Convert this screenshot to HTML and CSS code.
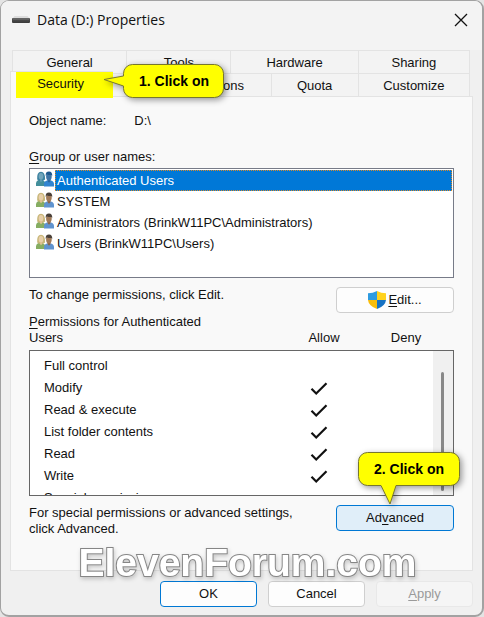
FILE: index.html
```html
<!DOCTYPE html>
<html lang="en">
<head>
<meta charset="utf-8">
<meta name="viewport" content="width=device-width, initial-scale=1">
<title>Data (D:) Properties</title>
<link rel="stylesheet" href="styles.css">
</head>
<body>
<svg class="defs" width="0" height="0" aria-hidden="true">
  <defs>
    <symbol id="check" viewBox="0 0 18 14">
      <path d="M1.500 6.800 6.200 11.500 16.500 1.300" fill="none" stroke="#111" stroke-width="2.200"/>
    </symbol>
    <linearGradient id="drive" x1="0" y1="0" x2="0" y2="1">
      <stop offset="0" stop-color="#555"/><stop offset="1" stop-color="#3a3a3a"/>
    </linearGradient>
    <symbol id="people" viewBox="0 0 18 16">
      <path d="M0 15V12q.3-2.600 3-3.300h3.500l3.500 3V15z" fill="#86ad62"/>
      <path d="M1.200 8.500Q.6 0.800 5 .8q4.200 0 4.100 7.700L7 9.800H3z" fill="#c8b678"/>
      <ellipse cx="5" cy="5.300" rx="2.300" ry="3.300" fill="#e8cfa9"/>
      <path d="M4 8h2.200v2L5 11.300 4 10z" fill="#dfc193"/>
      <path d="M8 15.500V13q.2-3 3-3.600h4q2.800.6 3 3.600v2.500z" fill="#5f93cf"/>
      <path d="M11.500 8h3v2l-1.500 1.700L11.500 10z" fill="#8a6344"/>
      <ellipse cx="12.900" cy="5.700" rx="2.800" ry="3.700" fill="#a07a58"/>
      <path d="M9.700 5Q9.300.6 13 .6 16.600.7 16.200 5.300L15.300 4Q12.500 4.300 11 3.200z" fill="#4a4038"/>
    </symbol>
    <symbol id="people-selected" viewBox="0 0 18 16">
      <path d="M0 15V12q.3-2.600 3-3.300h3.500l3.500 3V15z" fill="#438f9b"/>
      <path d="M1.200 8.500Q.6 0.800 5 .8q4.200 0 4.100 7.700L7 9.800H3z" fill="#3c82a0"/>
      <ellipse cx="5" cy="5.300" rx="2.300" ry="3.300" fill="#71a5bb"/>
      <path d="M4 8h2.200v2L5 11.300 4 10z" fill="#609cb0"/>
      <path d="M8 15.500V13q.2-3 3-3.600h4q2.800.6 3 3.600v2.500z" fill="#3285d0"/>
      <path d="M11.500 8h3v2l-1.500 1.700L11.500 10z" fill="#2b659c"/>
      <ellipse cx="12.900" cy="5.700" rx="2.800" ry="3.700" fill="#3e74a5"/>
      <path d="M9.700 5Q9.300.6 13 .6 16.600.7 16.200 5.300L15.300 4Q12.500 4.300 11 3.200z" fill="#1f598e"/>
    </symbol>
  </defs>
</svg>

<main class="window">
  <header class="titlebar">
    <svg class="drive-icon" viewBox="0 0 18 8" aria-hidden="true">
      <path d="M2.500 0h13L18 3H0z" fill="#ddd"/>
      <rect y="2" width="18" height="5" rx="1" fill="url(#drive)"/>
      <path d="M1 3h16" stroke="#777" stroke-width="1"/>
    </svg>
    <h1 class="title">Data (D:) Properties</h1>
    <button class="close" type="button" aria-label="Close">
      <svg viewBox="0 0 14 14" width="14" height="14" aria-hidden="true"><path d="M1 1 13 13M13 1 1 13" stroke="#111" stroke-width="1.300" fill="none"/></svg>
    </button>
  </header>

  <nav class="tabs" role="tablist">
    <div class="tab-row tab-row-back">
      <button class="tab" role="tab" type="button">General</button>
      <button class="tab" role="tab" type="button">Tools</button>
      <button class="tab" role="tab" type="button">Hardware</button>
      <button class="tab" role="tab" type="button">Sharing</button>
    </div>
    <div class="tab-row tab-row-front">
      <button class="tab tab-active" role="tab" type="button" aria-selected="true"><span class="highlight">Security</span></button>
      <button class="tab" role="tab" type="button">Previous Versions</button>
      <button class="tab" role="tab" type="button">Quota</button>
      <button class="tab" role="tab" type="button">Customize</button>
    </div>
    <div class="callout callout-tab">
      <svg class="callout-shape" viewBox="0 0 122 36" aria-hidden="true"><path d="M29.500 .5H111.500a9 9 0 0 1 9 9V24.500a9 9 0 0 1-9 9H29.500a9 9 0 0 1-9-9V22L1 15.500 20.500 12V9.500a9 9 0 0 1 9-9z"/></svg>
      <span class="callout-text">1. Click on</span>
    </div>
  </nav>

  <section class="panel" role="tabpanel">
    <p class="object"><span>Object name:</span><span>D:\</span></p>

    <p class="label" id="group-label"><u>G</u>roup or user names:</p>
    <ul class="box users" role="listbox" aria-labelledby="group-label">
      <li class="user" role="option" aria-selected="true"><svg class="user-icon" aria-hidden="true"><use href="#people-selected"/></svg><span class="user-name selected">Authenticated Users</span></li>
      <li class="user" role="option"><svg class="user-icon" aria-hidden="true"><use href="#people"/></svg><span class="user-name">SYSTEM</span></li>
      <li class="user" role="option"><svg class="user-icon" aria-hidden="true"><use href="#people"/></svg><span class="user-name">Administrators (BrinkW11PC\Administrators)</span></li>
      <li class="user" role="option"><svg class="user-icon" aria-hidden="true"><use href="#people"/></svg><span class="user-name">Users (BrinkW11PC\Users)</span></li>
    </ul>

    <div class="action-row edit-row">
      <p>To change permissions, click Edit.</p>
      <button class="button" type="button">
        <svg class="shield" viewBox="0 0 18 18" aria-hidden="true">
          <path d="M9 0Q5 2.200 0 2.200V9h9z" fill="#2e9be0"/>
          <path d="M9 0q4 2.200 9 2.200V9H9z" fill="#ffd21c"/>
          <path d="M0 9q.6 6 9 9V9z" fill="#f8bd0b"/>
          <path d="M18 9q-.6 6-9 9V9z" fill="#1672c4"/>
        </svg><span><u>E</u>dit...</span>
      </button>
    </div>

    <div class="perm-head">
      <p class="perm-title" id="perm-label"><u>P</u>ermissions for Authenticated Users</p>
      <span class="perm-col">Allow</span>
      <span class="perm-col">Deny</span>
    </div>
    <div class="box perms">
      <table class="perm-table" aria-labelledby="perm-label">
        <tbody>
          <tr><th scope="row">Full control</th><td></td><td></td></tr>
          <tr><th scope="row">Modify</th><td><svg class="check"><use href="#check"/></svg></td><td></td></tr>
          <tr><th scope="row">Read &amp; execute</th><td><svg class="check"><use href="#check"/></svg></td><td></td></tr>
          <tr><th scope="row">List folder contents</th><td><svg class="check"><use href="#check"/></svg></td><td></td></tr>
          <tr><th scope="row">Read</th><td><svg class="check"><use href="#check"/></svg></td><td></td></tr>
          <tr><th scope="row">Write</th><td><svg class="check"><use href="#check"/></svg></td><td></td></tr>
          <tr><th scope="row">Special permissions</th><td></td><td></td></tr>
        </tbody>
      </table>
      <div class="scrollbar"><div class="thumb"></div></div>
    </div>

    <div class="action-row">
      <p>For special permissions or advanced settings, click Advanced.</p>
      <div class="anchor">
        <button class="button button-hot" type="button"><span>Ad<u>v</u>anced</span></button>
        <div class="callout callout-advanced">
          <svg class="callout-shape" viewBox="0 0 102 55" aria-hidden="true"><path d="M9.500 .5H92.500a9 9 0 0 1 9 9V24.500a9 9 0 0 1-9 9H38L32 52 23 33.500H9.500a9 9 0 0 1-9-9V9.500a9 9 0 0 1 9-9z"/></svg>
          <span class="callout-text">2. Click on</span>
        </div>
      </div>
    </div>
    <div class="watermark">ElevenForum.com</div>
  </section>

  <footer class="footer">
    <button class="button button-default" type="button">OK</button>
    <button class="button" type="button">Cancel</button>
    <button class="button" type="button" disabled><span><u>A</u>pply</span></button>
  </footer>
</main>
</body>
</html>
```
FILE: styles.css
```css
* {
  box-sizing: border-box;
}

body {
  margin: 0;
  background: #e4e4e4;
  color: #111;
  font: 13px/16px "Liberation Sans", Arial, sans-serif;
}

p,
h1,
ul {
  margin: 0;
  padding: 0;
}

button {
  font: inherit;
  color: inherit;
}

u {
  text-underline-offset: 2px;
}

.defs {
  position: absolute;
}

.window {
  display: flex;
  flex-direction: column;
  min-height: 100vh;
  padding: 0 9px 8px;
  border: 2px solid #a2a2a2;
  border-width: 1px 2px 2px 1px;
  border-radius: 9px;
  background: #f0f0f0;
}

.titlebar {
  display: flex;
  align-items: center;
  height: 49px;
  margin: 0 -9px;
  padding: 0 14px 12px 11px;
  border-radius: 8px 8px 0 0;
  background: #f3f3f3;
}

.drive-icon {
  width: 18px;
  height: 8px;
}

.title {
  flex: 1;
  margin-left: 7px;
  font: 14px/20px "Open Sans", "Noto Sans", sans-serif;
}

.close {
  display: flex;
  padding: 0;
  border: 0;
  background: none;
}

/* Tabs */

.tabs {
  position: relative;
  padding: 0 3px 0 2px;
}

.tab-row {
  display: grid;
}

.tab-row-back {
  grid-template-columns: 115fr 104fr 127fr 111fr;
}

.tab-row-front {
  grid-template-columns: 101fr 158fr 87fr 111fr;
}

.tab {
  height: 23px;
  padding: 2px 0 0;
  border: 1px solid #e3e3e3;
  border-width: 1px 1px 0 0;
  background: #f3f3f3;
}

.tab-row-back .tab:first-child {
  border-left-width: 1px;
}

.tab-active {
  position: relative;
  display: flex;
  height: 27px;
  margin: -2px 0 -2px -2px;
  padding: 0 0 0 5px;
  border-width: 1px 0 0 1px;
  background: #f9f9f9;
}

.highlight {
  flex: 1;
  padding: 4px 8px 6px 0;
  background: #ff0;
}

/* Security page */

.panel {
  flex: 1;
  padding: 16px 18px 0;
  border: 1px solid #e3e3e3;
  background: #f9f9f9;
}

.object {
  display: flex;
  gap: 28px;
  margin-bottom: 20px;
}

.box {
  border: 1px solid #777b88;
  background: #fff;
}

.users {
  height: 110px;
  margin-top: 3px;
  padding: 1px 1px 1px 6px;
  list-style: none;
}

.user {
  display: flex;
  gap: 1px;
  height: 21px;
}

.user-icon {
  width: 18px;
  height: 16px;
  margin-top: 1px;
}

.user-name {
  flex: 1;
  padding: 2px 1px 1px;
  border: 1px solid transparent;
}

.selected {
  border: 1px dotted #d98a2b;
  background: #0078d7;
  color: #fff;
}

.action-row {
  display: flex;
  gap: 20px;
  justify-content: space-between;
  margin-top: 9px;
}

.edit-row {
  margin-bottom: 1px;
}

.button {
  display: flex;
  align-items: center;
  justify-content: center;
  gap: 2px;
  width: 118px;
  height: 26px;
  padding: 0;
  border: 1px solid #cfcfcf;
  border-radius: 4px;
  background: #fdfdfd;
}

.button-hot {
  border-color: #0078d4;
  background: #e0eef9;
}

.shield {
  width: 18px;
  height: 18px;
}

.perm-head {
  display: flex;
  align-items: flex-end;
  padding-right: 7px;
}

.perm-title {
  flex: 1;
  padding-right: 50px;
}

.perm-col {
  width: 82px;
  text-align: center;
}

.perms {
  display: flex;
  height: 146px;
  margin-top: 4px;
  overflow: hidden;
  border-color: #666;
}

.perm-table {
  flex: 1;
  height: 154px;
  margin-top: 4px;
  border-collapse: collapse;
}

.perm-table th,
.perm-table td {
  height: 22px;
  padding: 0;
}

.perm-table th {
  width: 252px;
  padding-left: 14px;
  font-weight: normal;
  text-align: left;
}

.perm-table td {
  min-width: 76px;
}

.check {
  display: block;
  width: 18px;
  height: 14px;
  margin: 1px auto 0;
}

.scrollbar {
  width: 20px;
  padding: 21px 8px 4px;
  background: #f0f0f0;
}

.thumb {
  width: 3px;
  height: 119px;
  border-radius: 2px;
  background: #888;
}

.anchor {
  position: relative;
}

/* Annotations */

.callout {
  position: absolute;
  z-index: 1;
}

.callout-tab {
  left: 93px;
  top: 14px;
  width: 122px;
  height: 36px;
}

.callout-advanced {
  left: 22px;
  top: -53px;
  width: 102px;
  height: 55px;
}

.callout-shape {
  display: block;
  overflow: visible;
  fill: #ff0;
  stroke: #77772e;
  stroke-width: 1;
  filter: drop-shadow(2px 2px 3px rgba(0, 0, 0, 0.4));
}

.callout-text {
  position: absolute;
  inset: 9px 0 auto auto;
  width: 102px;
  color: #000;
  font-size: 14px;
  font-weight: bold;
  text-align: center;
}

.watermark {
  position: relative;
  z-index: 1;
  margin: 3px -6px -20px 6px;
  color: #fff;
  font-size: 39px;
  font-weight: bold;
  line-height: 46px;
  text-align: center;
  -webkit-text-stroke: 2px #868686;
  paint-order: stroke fill;
  filter: drop-shadow(1px 2px 2px rgba(0, 0, 0, 0.2));
}

.footer {
  display: flex;
  gap: 11px;
  justify-content: flex-end;
  padding-top: 10px;
}

.footer .button {
  width: 97px;
}

.footer .button-default {
  border-color: #0078d4;
}

.footer .button:disabled {
  border-color: #e8e8e8;
  background: #f5f5f5;
  color: #9a9a9a;
}
```
